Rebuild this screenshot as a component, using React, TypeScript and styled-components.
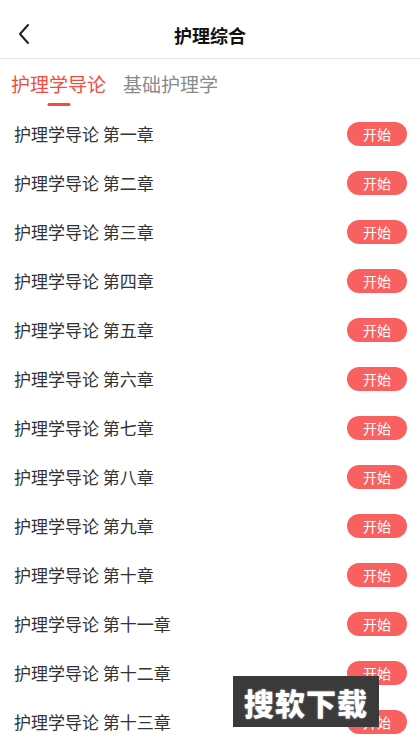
import React, { useState } from "react"
import styled, { createGlobalStyle } from "styled-components"

const GlobalStyle = createGlobalStyle`
    html, body {
        margin: 0;
        padding: 0;
        background: #fff;
        font-family: "Noto Sans CJK SC", "Noto Sans", sans-serif;
    }
`

const Page = styled.div`
    position: relative;
    width: 420px;
    height: 746px;
    overflow: hidden;
    background: #fff;
`

const Header = styled.div`
    height: 58px;
    display: flex;
    align-items: center;
    justify-content: center;
    position: relative;
    border-bottom: 1px solid #e6e6e6;
`

const BackButton = styled.button`
    position: absolute;
    left: 12px;
    top: 22px;
    width: 24px;
    height: 24px;
    padding: 0;
    border: none;
    background: none;
    display: flex;
    align-items: center;
    justify-content: center;
`

const Title = styled.h1`
    margin: 0;
    font-size: 18px;
    font-weight: 700;
    color: #111;
    line-height: 24px;
    margin-top: 12px;
`

const Tabs = styled.div`
    height: 50px;
    display: flex;
    gap: 17px;
    padding: 0 11px;
`

const Tab = styled.div<{ $active?: boolean }>`
    position: relative;
    font-size: 19px;
    line-height: 26px;
    padding-top: 12px;
    color: ${p => (p.$active ? "#f24b43" : "#8a8a8a")};
    cursor: pointer;
`

const TabLine = styled.span`
    position: absolute;
    left: 50%;
    transform: translateX(-50%);
    top: 44px;
    width: 23px;
    height: 3px;
    border-radius: 2px;
    background: #f24b43;
`

const List = styled.div`
    display: flex;
    flex-direction: column;
`

const Row = styled.div`
    height: 49px;
    display: flex;
    align-items: center;
    justify-content: space-between;
    padding: 0 13px 0 14px;
`

const RowTitle = styled.span`
    font-size: 17px;
    color: #333;
`

const StartButton = styled.button`
    width: 60px;
    height: 24px;
    border: none;
    border-radius: 12px;
    background: #f96161;
    color: #fff;
    font-family: inherit;
    font-size: 14px;
    padding: 0;
`

const Watermark = styled.div`
    position: absolute;
    left: 233px;
    top: 676px;
    width: 146px;
    height: 51px;
    background: #3a3a3a;
    display: flex;
    align-items: center;
    justify-content: center;
    color: #fff;
    font-size: 30px;
    font-weight: 900;
    letter-spacing: 1px;
    text-shadow: 0 0 2px rgba(255, 255, 255, .6);
`

const chapters = ["一", "二", "三", "四", "五", "六", "七", "八", "九", "十", "十一", "十二", "十三"]

export default function App() {
    const [tab, setTab] = useState(0)
    return (
        <Page>
            <GlobalStyle />
            <Header>
                <BackButton>
                    <svg width="14" height="22" viewBox="0 0 14 22">
                        <path d="M11 2 L3 11 L11 20" fill="none" stroke="#222" strokeWidth="2" strokeLinecap="round" strokeLinejoin="round" />
                    </svg>
                </BackButton>
                <Title>护理综合</Title>
            </Header>
            <Tabs>
                {["护理学导论", "基础护理学"].map((t, i) => (
                    <Tab key={t} $active={tab === i} onClick={() => setTab(i)}>
                        {t}
                        {tab === i && <TabLine />}
                    </Tab>
                ))}
            </Tabs>
            <List>
                {chapters.map(c => (
                    <Row key={c}>
                        <RowTitle>护理学导论 第{c}章</RowTitle>
                        <StartButton>开始</StartButton>
                    </Row>
                ))}
            </List>
            <Watermark>搜软下载</Watermark>
        </Page>
    )
}
